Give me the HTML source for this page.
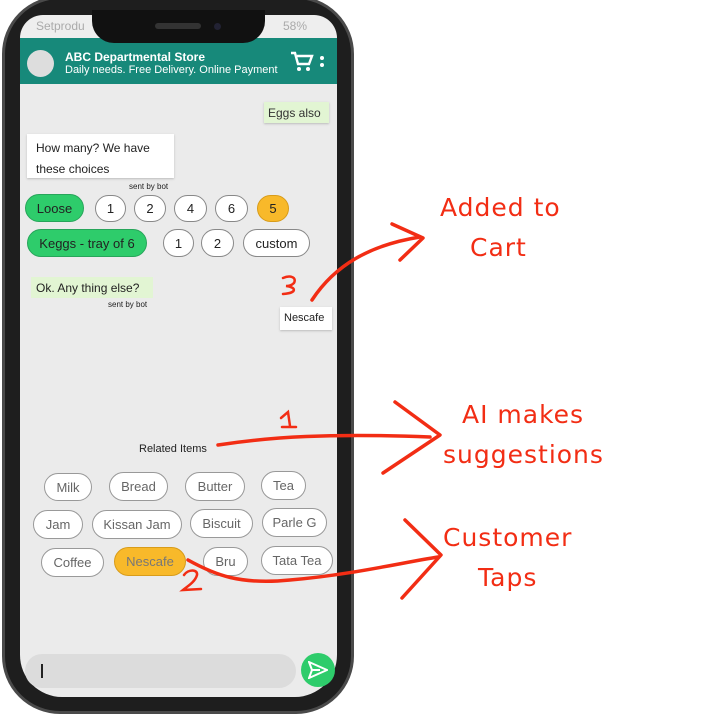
<!DOCTYPE html>
<html><head><meta charset="utf-8"><style>
*{margin:0;padding:0;box-sizing:border-box}
body{width:709px;height:714px;background:#fff;position:relative;overflow:hidden;font-family:"Liberation Sans",Arial,sans-serif}
.abs{position:absolute}
.phone{left:2px;top:-4px;width:352px;height:718px;background:#1e1e1e;border-radius:58px;border:3px solid #4a4a4a}
.screen{left:20px;top:15px;width:317px;height:682px;background:#ebebeb;border-radius:42px;overflow:hidden}
.notch{left:92px;top:10px;width:173px;height:33px;background:#111;border-radius:0 0 22px 22px}
.hdr{left:20px;top:38px;width:317px;height:46px;background:#17897a}
.chip{position:absolute;border:1px solid #999;border-radius:16px;background:#fff;display:flex;align-items:center;justify-content:center;font-size:13px;color:#666}
.btn{position:absolute;border:1px solid #888;border-radius:15px;background:#fff;display:flex;align-items:center;justify-content:center;font-size:13px;color:#222}
.g{background:#2ecc6b;border-color:#27a55a}
.o{background:#f8b92a;border-color:#d89c1a}
.t{font-family:"DejaVu Sans",sans-serif;color:#f22d14;font-size:25px;position:absolute;letter-spacing:1px}
</style></head><body>
<div class="abs phone"></div>
<div class="abs screen"></div>
<div class="abs hdr"></div>
<div class="abs" style="left:20px;top:15px;width:317px;height:23px;background:#eee;border-radius:40px 40px 0 0"></div>
<div class="abs" style="left:36px;top:19px;font-size:12px;color:#aaa">Setprodu</div>
<div class="abs" style="left:283px;top:19px;font-size:12px;color:#aaa">58%</div>
<div class="abs notch"></div>
<div class="abs" style="left:155px;top:23px;width:46px;height:6px;background:#333;border-radius:3px"></div>
<div class="abs" style="left:214px;top:23px;width:7px;height:7px;background:#223;border-radius:50%"></div>
<div class="abs" style="left:27px;top:50px;width:27px;height:27px;background:#ddd;border-radius:50%"></div>
<div class="abs" style="left:65px;top:50px;font-size:12px;font-weight:bold;color:#fff">ABC Departmental Store</div>
<div class="abs" style="left:65px;top:64px;font-size:11px;color:#fff">Daily needs. Free Delivery. Online Payment</div>
<svg class="abs" style="left:290px;top:51px" width="24" height="22" viewBox="0 0 24 22"><path d="M1 2h4l3 11h11l3-8H7" fill="none" stroke="#fff" stroke-width="2.4"/><circle cx="9" cy="18" r="2" fill="#fff"/><circle cx="18" cy="18" r="2" fill="#fff"/></svg>
<div class="abs" style="left:320px;top:56px;width:4px;height:4px;background:#fff;border-radius:50%;box-shadow:0 7px 0 #fff"></div>
<div class="abs" style="left:264px;top:102px;width:65px;height:21px;background:#e2f5d3;font-size:12px;color:#333;padding:4px 4px;box-shadow:0 1px 2px #bbb">Eggs also</div>
<div class="abs" style="left:27px;top:134px;width:147px;height:44px;background:#fff;font-size:12px;color:#222;padding:4px 9px;line-height:21px;box-shadow:0 1px 2px #bbb">How many? We have these choices</div>
<div class="abs" style="left:129px;top:182px;font-size:8px;color:#222">sent by bot</div>
<div class="btn g" style="left:25px;top:194px;width:59px;height:28px">Loose</div>
<div class="btn" style="left:95px;top:195px;width:31px;height:27px">1</div>
<div class="btn" style="left:134px;top:195px;width:32px;height:27px">2</div>
<div class="btn" style="left:174px;top:195px;width:33px;height:27px">4</div>
<div class="btn" style="left:215px;top:195px;width:33px;height:27px">6</div>
<div class="btn o" style="left:257px;top:195px;width:32px;height:27px">5</div>
<div class="btn g" style="left:27px;top:229px;width:120px;height:28px">Keggs - tray of 6</div>
<div class="btn" style="left:163px;top:229px;width:31px;height:28px">1</div>
<div class="btn" style="left:201px;top:229px;width:33px;height:28px">2</div>
<div class="btn" style="left:243px;top:229px;width:67px;height:28px">custom</div>
<div class="abs" style="left:31px;top:277px;width:122px;height:21px;background:#e2f5d3;font-size:12px;color:#222;padding:4px 5px">Ok. Any thing else?</div>
<div class="abs" style="left:108px;top:300px;font-size:8px;color:#222">sent by bot</div>
<div class="abs" style="left:280px;top:307px;width:52px;height:23px;background:#fff;font-size:11px;color:#222;padding:5px 4px;box-shadow:0 1px 2px #bbb">Nescafe</div>
<div class="abs" style="left:139px;top:443px;font-size:11px;color:#222">Related Items</div>
<div class="chip" style="left:44px;top:473px;width:48px;height:28px">Milk</div>
<div class="chip" style="left:109px;top:472px;width:59px;height:29px">Bread</div>
<div class="chip" style="left:185px;top:472px;width:60px;height:29px">Butter</div>
<div class="chip" style="left:261px;top:471px;width:45px;height:29px">Tea</div>
<div class="chip" style="left:33px;top:510px;width:50px;height:29px">Jam</div>
<div class="chip" style="left:92px;top:510px;width:90px;height:29px">Kissan Jam</div>
<div class="chip" style="left:190px;top:509px;width:63px;height:29px">Biscuit</div>
<div class="chip" style="left:262px;top:508px;width:65px;height:29px">Parle G</div>
<div class="chip" style="left:41px;top:548px;width:63px;height:29px">Coffee</div>
<div class="chip o" style="left:114px;top:547px;width:72px;height:29px;color:#777">Nescafe</div>
<div class="chip" style="left:203px;top:547px;width:45px;height:29px">Bru</div>
<div class="chip" style="left:261px;top:546px;width:72px;height:29px">Tata Tea</div>
<div class="abs" style="left:25px;top:654px;width:271px;height:34px;background:#dcdcdc;border-radius:17px"></div>
<div class="abs" style="left:41px;top:664px;width:2px;height:14px;background:#222"></div>
<div class="abs" style="left:301px;top:653px;width:34px;height:34px;background:#2ecc6b;border-radius:50%"></div>
<svg class="abs" style="left:308px;top:661px" width="20" height="18" viewBox="0 0 20 18"><path d="M1 1L19 9L1 17L4 9Z M4 9H12" fill="none" stroke="#fff" stroke-width="2"/></svg>
<svg class="abs" style="left:0;top:0" width="709" height="714">
<g fill="none" stroke="#f22d14" stroke-width="3.5" stroke-linecap="round" stroke-linejoin="round">
<path d="M312 300C335 265 370 245 420 237"/>
<path d="M392 224L423 238L400 260"/>
<path d="M218 445C270 437 330 433 430 437"/>
<path d="M395 402L440 435L383 473"/>
<path d="M188 560C215 575 240 585 290 580C350 575 400 563 438 557"/>
<path d="M405 520L441 555L402 598"/>
</g>
<g fill="none" stroke="#f22d14" stroke-width="2.5" stroke-linecap="round">
<path d="M283 278C290 275 297 277 294 283C291 286 288 286 286 286C296 287 298 293 283 294"/>
<path d="M281 418L288 412L290 426M282 427L296 427"/>
<path d="M184 575C188 569 198 569 197 575C195 582 188 586 183 590L201 589"/>
</g>
</svg>
<div class="t" style="left:440px;top:193px">Added to</div>
<div class="t" style="left:470px;top:233px">Cart</div>
<div class="t" style="left:462px;top:400px">AI makes</div>
<div class="t" style="left:443px;top:440px">suggestions</div>
<div class="t" style="left:443px;top:523px">Customer</div>
<div class="t" style="left:478px;top:563px">Taps</div>
</body></html>
